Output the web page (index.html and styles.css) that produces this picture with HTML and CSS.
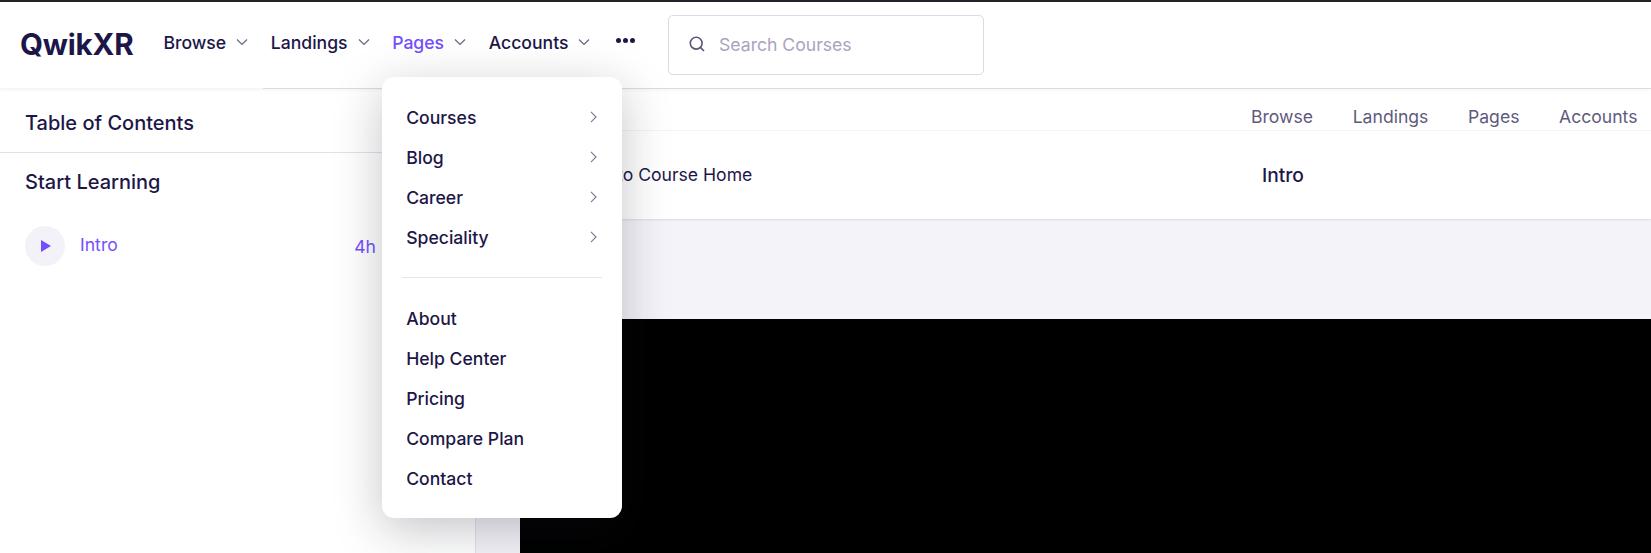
FILE: index.html
```html
<!DOCTYPE html>
<html lang="en">
<head>
<meta charset="utf-8">
<title>QwikXR</title>
<link rel="stylesheet" href="styles.css">
</head>
<body>
<header class="header">
  <a class="logo">QwikXR</a>
  <nav class="nav">
    <div class="nav-item nav-browse"><span>Browse</span><svg class="caret" viewBox="0 0 12 12"><path d="M1 3.5 6 8.5 11 3.5"/></svg></div>
    <div class="nav-item nav-landings"><span>Landings</span><svg class="caret" viewBox="0 0 12 12"><path d="M1 3.5 6 8.5 11 3.5"/></svg></div>
    <div class="nav-item nav-pages active"><span>Pages</span><svg class="caret" viewBox="0 0 12 12"><path d="M1 3.5 6 8.5 11 3.5"/></svg>
      <div class="menu">
        <ul class="menu-list">
          <li class="menu-row"><span>Courses</span><svg class="chev" viewBox="0 0 8 14"><path d="M1 1 7 7 1 13"/></svg></li>
          <li class="menu-row"><span>Blog</span><svg class="chev" viewBox="0 0 8 14"><path d="M1 1 7 7 1 13"/></svg></li>
          <li class="menu-row"><span>Career</span><svg class="chev" viewBox="0 0 8 14"><path d="M1 1 7 7 1 13"/></svg></li>
          <li class="menu-row"><span>Speciality</span><svg class="chev" viewBox="0 0 8 14"><path d="M1 1 7 7 1 13"/></svg></li>
        </ul>
        <div class="menu-divider"></div>
        <ul class="menu-list">
          <li class="menu-row"><span>About</span></li>
          <li class="menu-row"><span>Help Center</span></li>
          <li class="menu-row"><span>Pricing</span></li>
          <li class="menu-row"><span>Compare Plan</span></li>
          <li class="menu-row"><span>Contact</span></li>
        </ul>
      </div>
    </div>
    <div class="nav-item nav-accounts"><span>Accounts</span><svg class="caret" viewBox="0 0 12 12"><path d="M1 3.5 6 8.5 11 3.5"/></svg></div>
    <div class="nav-more"><i></i><i></i><i></i></div>
  </nav>
  <div class="search">
    <svg class="search-icon" viewBox="0 0 16 16"><circle cx="7.2" cy="7.2" r="5.9"/><path d="M11.6 11.6 15 15"/></svg>
    <span class="search-text">Search Courses</span>
  </div>
</header>
<div class="layout">
  <aside class="sidebar">
    <div class="toc-title">Table of Contents</div>
    <div class="toc-body">
      <div class="section-title">Start Learning</div>
      <div class="lesson">
        <span class="play"><svg viewBox="0 0 10 12"><path d="M0 0 10 6 0 12Z"/></svg></span>
        <span class="lesson-name">Intro</span>
        <span class="lesson-time">4h</span>
      </div>
    </div>
  </aside>
  <main class="main">
    <div class="tabs">
      <span>Browse</span><span>Landings</span><span>Pages</span><span>Accounts</span>
    </div>
    <div class="course-bar">
      <span class="back">Back to Course Home</span>
      <span class="course-title">Intro</span>
    </div>
    <div class="player-wrap"><div class="player"></div></div>
  </main>
</div>
</body>
</html>
```
FILE: styles.css
```css
* { box-sizing: border-box; }
html, body { margin: 0; padding: 0; height: 100%; }
body {
  height: 553px;
  overflow: hidden;
  background: #fff;
  color: #1c1748;
  font-family: Inter, "Liberation Sans", sans-serif;
  font-size: 17.6px;
  border-top: 2px solid #212529;
}
ul { list-style: none; margin: 0; padding: 0; }

.header {
  height: 86px;
  display: flex;
  align-items: center;
  padding: 0 0 0 20px;
  background: #fff;
  box-shadow: 0 1px 4px rgba(20, 22, 36, 0.08);
  position: relative;
  z-index: 3;
}
.header::after {
  content: "";
  position: absolute;
  left: 263px;
  right: 0;
  bottom: -1px;
  height: 1px;
  background: #dcd9e9;
}
.logo {
  font-size: 29.6px;
  font-weight: 700;
  letter-spacing: -0.2px;
  color: #1c1748;
  margin-right: 30px;
  line-height: 1;
}
.nav { display: flex; align-items: center; height: 100%; padding-bottom: 6px; }
.nav-item {
  display: flex;
  align-items: center;
  gap: 10px;
  font-weight: 450;
  position: relative;
  color: #1c1748;
  margin-right: 22.6px;
  height: 24px;
}
.nav-item.active { color: #754ffe; }
.caret { width: 12px; height: 12px; fill: none; stroke: #6a6585; stroke-width: 1.2; }
.nav-more { display: flex; gap: 2px; margin-left: 3px; margin-bottom: 3px; }
.nav-more i { width: 5px; height: 5px; border-radius: 50%; background: #1c1748; display: block; }

.search {
  width: 316px;
  height: 60px;
  margin-left: 33px;
  border: 1px solid #dcd9e9;
  border-radius: 5px;
  display: flex;
  align-items: center;
  padding: 0 0 2px 20px;
  gap: 14px;
}
.search-icon { width: 16px; height: 16px; fill: none; stroke: #5a5578; stroke-width: 1.6; }
.search-text { color: #a8a3be; }

.menu {
  position: absolute;
  top: 47px;
  left: -10px;
  width: 240px;
  height: 441px;
  background: #fff;
  border-radius: 12px;
  padding: 20px 20px;
  box-shadow: 0 12px 48px rgba(20, 22, 36, 0.25);
  z-index: 5;
}
.menu-row {
  height: 40px;
  display: flex;
  align-items: center;
  justify-content: space-between;
  padding: 0 3px 0 4px;
  color: #1c1748;
  font-weight: 450;
}
.chev { width: 7px; height: 12px; fill: none; stroke: #7c7893; stroke-width: 1.3; margin-right: 2px; }
.menu-divider { height: 1px; background: #e6e3f1; margin: 20px 0; }

.layout { display: flex; height: 465px; }
.sidebar {
  width: 476px;
  flex: none;
  border-right: 1px solid #e2e0ec;
  background: #fff;
  position: relative;
  z-index: 2;
}
.toc-title {
  height: 65px;
  display: flex;
  align-items: center;
  padding: 6px 0 0 25px;
  font-size: 20px;
  font-weight: 450;
  border-bottom: 1px solid #e2e0ec;
}
.toc-body { padding: 14px 25px; }
.section-title { font-size: 20px; font-weight: 450; height: 30px; line-height: 30px; }
.lesson { display: flex; align-items: center; margin-top: 29px; color: #754ffe; padding-right: 74px; }
.play {
  width: 40px;
  height: 40px;
  border-radius: 50%;
  background: #f3f2f8;
  display: flex;
  align-items: center;
  justify-content: center;
  margin-right: 15px;
  padding-left: 2px;
}
.play svg { width: 10px; height: 12px; fill: #754ffe; }
.lesson-name { flex: 1; margin-top: -3px; }

.main { flex: 1; min-width: 0; background: #f4f3f9; display: flex; flex-direction: column; }
.tabs {
  height: 43px;
  background: #fff;
  border-bottom: 1px solid #f4f3f9;
  display: flex;
  justify-content: flex-end;
  align-items: center;
  gap: 39.6px;
  padding: 18px 13.5px 4px 0;
  color: #5f5a7d;
}
.course-bar {
  height: 88px;
  background: #fff;
  box-shadow: 0 1px 2px rgba(20, 22, 36, 0.1);
  display: flex;
  align-items: center;
  padding-left: 95px;
  position: relative;
}
.back { color: #1c1748; margin-top: -2px; }
.course-title {
  position: absolute;
  left: 786px;
  font-size: 19.2px;
  font-weight: 450;
  color: #1c1748;
}
.player-wrap { flex: 1; padding: 100px 0 0 44px; }
.player { height: 100%; background: #000; }
```
